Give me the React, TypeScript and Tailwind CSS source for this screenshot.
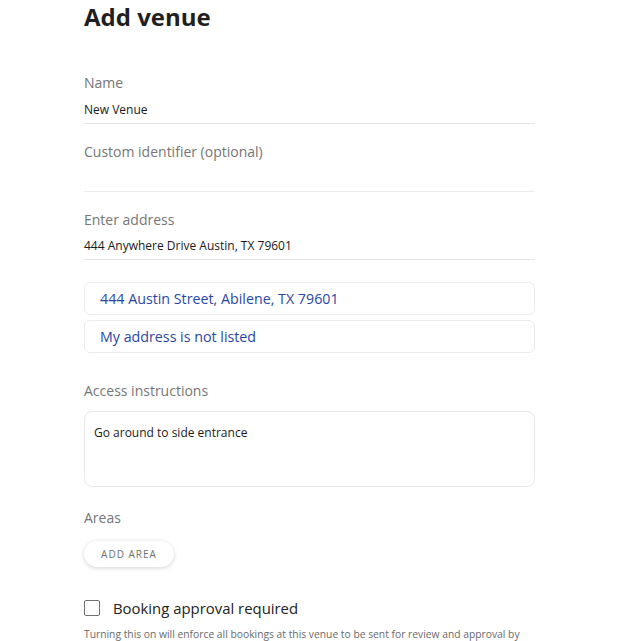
import React from 'react'

export default function App() {
    return (
        <div className="min-h-screen bg-white font-['Open_Sans',sans-serif] text-[#222]">
            <div className="ml-[84px] w-[451px]">
                <h1 className="pt-[1px] text-[24px] font-bold leading-[32px] text-[#1f1f1f]">Add venue</h1>

                <div className="mt-[40px] border-b border-[#e4e4e4] pb-[4px]">
                    <div className="text-[14px] leading-[20px] text-[#767676]">Name</div>
                    <div className="mt-[8px] text-[12px] leading-[18px] text-[#1a1a1a]">New Venue</div>
                </div>

                <div className="mt-[18px] h-[50px] border-b border-[#ececec]">
                    <div className="text-[14px] leading-[20px] text-[#767676]">Custom identifier (optional)</div>
                </div>

                <div className="mt-[18px] border-b border-[#e4e4e4] pb-[4px]">
                    <div className="text-[14px] leading-[20px] text-[#767676]">Enter address</div>
                    <div className="mt-[7px] text-[12px] leading-[18px] text-[#1a1a1a]">444 Anywhere Drive Austin, TX 79601</div>
                </div>

                <div className="mt-[22px] flex flex-col gap-[5px]">
                    <div className="flex h-[33px] items-center rounded-[6px] border border-[#ececec] px-[15px] text-[14.25px] text-[#2a47a6]">
                        444 Austin Street, Abilene, TX 79601
                    </div>
                    <div className="flex h-[33px] items-center rounded-[6px] border border-[#ececec] px-[15px] text-[14.25px] text-[#2a47a6]">
                        My address is not listed
                    </div>
                </div>

                <div className="mt-[28px] text-[14px] leading-[20px] text-[#767676]">Access instructions</div>
                <div className="mt-[10px] h-[76px] rounded-[8px] border border-[#e8e8e8] px-[9px] pt-[12px] text-[12px] leading-[18px] text-[#1a1a1a]">
                    Go around to side entrance
                </div>

                <div className="mt-[21px] text-[14px] leading-[20px] text-[#767676]">Areas</div>
                <button className="mt-[13px] h-[26px] w-[90px] rounded-full bg-white text-[10px] tracking-[1px] text-[#6f6f6f] shadow-[0_1px_4px_rgba(0,0,0,0.18)]">
                    ADD AREA
                </button>

                <label className="mt-[31px] flex items-center gap-[13px]">
                    <span className="h-[16px] w-[16px] rounded-[2px] border-[1.5px] border-[#707070]" />
                    <span className="text-[14.9px] leading-[20px] text-[#222]">Booking approval required</span>
                </label>
                <p className="mt-[9px] whitespace-nowrap text-[10.3px] leading-[14px] text-[#6a6a6a]">
                    Turning this on will enforce all bookings at this venue to be sent for review and approval by
                </p>
            </div>
        </div>
    )
}
